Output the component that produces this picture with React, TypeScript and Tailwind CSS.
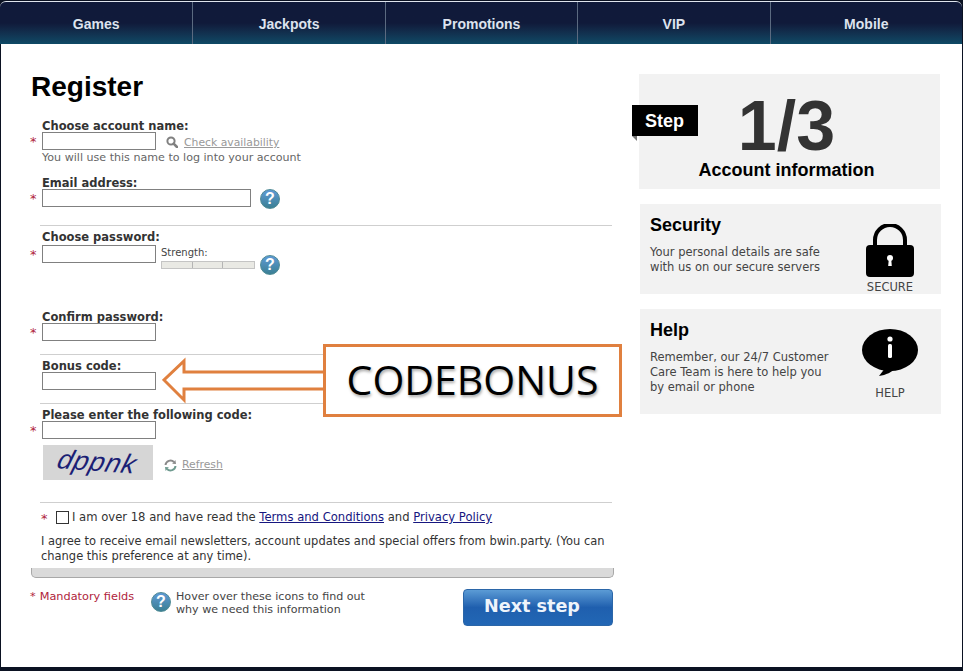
const navItems = ["Games", "Jackpots", "Promotions", "VIP", "Mobile"];

const Star = () => (
  <span className="w-[12px] shrink-0 translate-y-px text-[13px] leading-[18px] text-[#b0243c]">*</span>
);

const HelpIcon = ({ className = "" }: { className?: string }) => (
  <div
    className={`flex h-[20px] w-[20px] shrink-0 items-center justify-center rounded-full border border-[#4d8a94] bg-gradient-to-b from-[#5f9ad6] to-[#3a7f94] font-['Liberation_Sans',sans-serif] text-[16px] font-bold text-white ${className}`}
  >
    ?
  </div>
);

const Label = ({ children }: { children: string }) => (
  <div className="pl-[12px] text-[11.5px] font-bold leading-[14px] text-[#333]">{children}</div>
);

const TextInput = ({ wide = false }: { wide?: boolean }) => (
  <input
    type="text"
    className={`h-[18px] border border-[#808080] bg-white ${wide ? "w-[209px]" : "w-[114px]"}`}
  />
);

const Divider = ({ className }: { className: string }) => (
  <div className={`ml-[10px] h-px w-[572px] bg-[#cfcfcf] ${className}`} />
);

const SearchIcon = () => (
  <svg width="12" height="12" viewBox="0 0 12 12" className="shrink-0">
    <circle cx="5" cy="5" r="3.6" fill="none" stroke="#808080" strokeWidth="2" />
    <path d="M7.6 7.6 11 11" stroke="#808080" strokeWidth="2.6" strokeLinecap="round" />
  </svg>
);

const RefreshIcon = () => (
  <svg width="13" height="13" viewBox="0 0 13 13" className="shrink-0">
    <path d="M1.5 6A5 5 0 0 1 10 3" fill="none" stroke="#8a8a8a" strokeWidth="2" />
    <path d="M11.5 7A5 5 0 0 1 3 10" fill="none" stroke="#6f9a8f" strokeWidth="2" />
    <path d="M8.2 4.8 12 5 11.4 1Z" fill="#8a8a8a" />
    <path d="M4.8 8.2 1 8 1.6 12Z" fill="#6f9a8f" />
  </svg>
);

const LockIcon = () => (
  <svg width="48" height="54" viewBox="0 0 48 54">
    <path d="M9 24V16a15 15 0 0 1 30 0v8" fill="none" stroke="#000" strokeWidth="4" />
    <rect x="0" y="21" width="48" height="32" rx="4" fill="#000" />
    <circle cx="24" cy="34" r="3" fill="#fff" />
    <path d="M22.8 35h2.4l.6 7h-3.6Z" fill="#fff" />
  </svg>
);

const BubbleIcon = () => (
  <svg width="56" height="48" viewBox="0 0 56 48">
    <ellipse cx="28" cy="21" rx="28" ry="21" fill="#000" />
    <path d="M24 38 17 47c7-1 13-4 17-8Z" fill="#000" />
    <circle cx="28" cy="10" r="2.6" fill="#fff" />
    <rect x="26" y="15" width="4" height="14" rx="1.5" fill="#fff" />
  </svg>
);

const CalloutArrow = () => (
  <svg width="164" height="74" viewBox="0 0 164 74" className="absolute left-[161px] top-[345px]">
    <path d="M164 27H22V16L2 35 22 55V44H164" fill="#fff" stroke="#e0803f" strokeWidth="3" />
  </svg>
);

const SideCard = ({
  title,
  lines,
  caption,
  className,
  children,
}: {
  title: string;
  lines: string[];
  caption: string;
  className: string;
  children: React.ReactNode;
}) => (
  <section className={`ml-px flex w-[301px] justify-between bg-[#f2f2f2] pl-[10px] ${className}`}>
    <div>
      <h2 className="font-['Liberation_Sans',sans-serif] text-[18px] font-bold leading-[22px] text-black">
        {title}
      </h2>
      <div className="mt-[9px] text-[11.5px] leading-[15px] text-[#444]">
        {lines.map((line) => (
          <p key={line}>{line}</p>
        ))}
      </div>
    </div>
    <div className="flex w-[102px] flex-col items-center pt-[19px]">
      {children}
      <span className="mt-[2px] text-[11.5px] leading-[14px] text-[#444]">{caption}</span>
    </div>
  </section>
);

export default function App() {
  return (
    <div className="flex h-[671px] w-[963px] flex-col overflow-hidden bg-[#0b1222] pb-[4px] pl-px pr-px font-['DejaVu_Sans',sans-serif]">
      <nav className="-ml-px mt-px grid h-[43px] shrink-0 grid-cols-5 rounded-t-[6px] border-t border-[#dfe5ee] bg-gradient-to-b from-[#101a3a] from-50% to-[#0e4a66]">
        {navItems.map((item, i) => (
          <a
            key={item}
            className={`flex items-center justify-center pt-[2px] font-['Liberation_Sans',sans-serif] text-[14px] font-bold text-[#dde3ee] ${
              i > 0 ? "border-l border-[#5b6a80]" : ""
            }`}
          >
            {item}
          </a>
        ))}
      </nav>

      <main className="relative flex min-h-0 flex-1 bg-white">
        <div className="w-[638px] shrink-0 pl-[29px]">
          <h1 className="mt-[26px] pl-px font-['Liberation_Sans',sans-serif] text-[28px] font-bold leading-[34px] text-black">
            Register
          </h1>

          <div className="mt-[15px]">
            <Label>Choose account name:</Label>
            <div className="-mt-px flex items-start">
              <Star />
              <TextInput />
              <span className="ml-[10px] mt-[4px]">
                <SearchIcon />
              </span>
              <a className="ml-[6px] mt-[4px] text-[10.8px] leading-[14px] text-[#999] underline">Check availability</a>
            </div>
            <p className="mt-px pl-[12px] text-[11.1px] leading-[14px] text-[#666]">You will use this name to log into your account</p>
          </div>

          <div className="mt-[11px]">
            <Label>Email address:</Label>
            <div className="-mt-px flex items-start">
              <Star />
              <TextInput wide />
              <HelpIcon className="ml-[9px]" />
            </div>
          </div>

          <Divider className="mt-[16px]" />

          <div className="mt-[4px]">
            <Label>Choose password:</Label>
            <div className="mt-px flex items-start">
              <Star />
              <TextInput />
              <div className="ml-[5px] mt-px w-[94px]">
                <div className="text-[10px] leading-[14px] text-[#444]">Strength:</div>
                <div className="mt-px grid h-[8px] grid-cols-3 divide-x divide-[#b5b5b5] border border-[#c4c4c4] bg-[#e9e9e4]">
                  <span />
                  <span />
                  <span />
                </div>
              </div>
              <HelpIcon className="ml-[5px] mt-[10px]" />
            </div>
          </div>

          <div className="mt-[35px]">
            <Label>Confirm password:</Label>
            <div className="-mt-px flex items-start">
              <Star />
              <TextInput />
            </div>
          </div>

          <Divider className="mt-[13px]" />

          <div className="mt-[4px]">
            <Label>Bonus code:</Label>
            <div className="-mt-px flex items-start pl-[12px]">
              <TextInput />
            </div>
          </div>

          <Divider className="mt-[13px]" />

          <div className="mt-[4px]">
            <Label>Please enter the following code:</Label>
            <div className="-mt-px flex items-start">
              <Star />
              <TextInput />
            </div>
          </div>

          <div className="ml-[13px] mt-[6px] flex items-center">
            <div className="flex h-[35px] w-[110px] items-center justify-center bg-[#d6d6d6] font-['Liberation_Sans',sans-serif] text-[27px] italic tracking-[1px] text-[#1b1f75]">
              <span className="-translate-x-[1px] rotate-[4deg] -skew-x-12">dppnk</span>
            </div>
            <span className="ml-[11px] pt-[5px]">
              <RefreshIcon />
            </span>
            <a className="ml-[5px] pt-[6px] text-[10.8px] text-[#999] underline">Refresh</a>
          </div>

          <Divider className="mt-[22px]" />

          <div className="ml-[11px] mt-[7px] flex h-[14px] w-[570px] items-start">
            <span className="mt-[2px] w-[15px] text-[13px] leading-[14px] text-[#b0243c]">*</span>
            <span className="mt-px h-[13px] w-[13px] shrink-0 border border-[#333] bg-white" />
            <p className="ml-[3px] text-[11.6px] leading-[14px] text-[#333]">
              I am over 18 and have read the{" "}
              <a className="text-[#16167f] underline">Terms and Conditions</a> and{" "}
              <a className="text-[#16167f] underline">Privacy Policy</a>
            </p>
          </div>

          <p className="ml-[11px] mt-[10px] w-[575px] text-[11.48px] leading-[15px] text-[#333]">
            I agree to receive email newsletters, account updates and special offers from bwin.party. (You can change this preference at any time).
          </p>

          <div className="ml-px mt-[4px] h-[10px] w-[583px] rounded-b-[5px] border border-t-0 border-[#a8a8a8] bg-[#dadada]" />

          <div className="mt-[11px] flex items-start">
            <p className="flex w-[120px] gap-[4px] pt-px text-[11.3px] leading-[14px] text-[#b0243c]">
              <span>*</span>
              <span>Mandatory fields</span>
            </p>
            <HelpIcon className="ml-px mt-[3px]" />
            <p className="ml-[5px] w-[287px] pt-px text-[11.1px] leading-[13px] text-[#444]">
              Hover over these icons to find out
              <br />
              why we need this information
            </p>
            <button className="h-[37px] w-[150px] rounded-[4px] border border-[#2b66a8] bg-gradient-to-b from-[#5b9bd5] via-[#1f5fae] to-[#2267b5] pb-[3px] pr-[12px] text-[17.6px] font-bold text-[#eef4fb]">
              Next step
            </button>
          </div>
        </div>

        <aside className="w-[323px] pt-[30px]">
          <section className="relative h-[115px] w-[301px] bg-[#f2f2f2] pr-[6px] text-center font-['Liberation_Sans',sans-serif]">
            <div className="absolute -left-[7px] top-[31px] flex h-[31px] w-[66px] items-center justify-center bg-black pr-px pt-px text-[18px] font-bold text-white">
              Step
            </div>
            <svg width="5" height="5" viewBox="0 0 5 5" className="absolute -left-[7px] top-[62px]">
              <path d="M0 0h5v5Z" fill="#777" />
            </svg>
            <div className="pt-[20px] text-[70px] font-bold leading-[64px] text-[#333]">1/3</div>
            <div className="mt-px text-[18px] font-bold leading-[22px] text-black">Account information</div>
          </section>

          <SideCard
            title="Security"
            lines={["Your personal details are safe", "with us on our secure servers"]}
            caption="SECURE"
            className="mt-[15px] h-[90px] pt-[10px]"
          >
            <div className="-mt-[9px]">
              <LockIcon />
            </div>
          </SideCard>

          <SideCard
            title="Help"
            lines={["Remember, our 24/7 Customer", "Care Team is here to help you", "by email or phone"]}
            caption="HELP"
            className="mt-[15px] h-[105px] pt-[10px]"
          >
            <div className="-mt-[9px] mb-[7px]">
              <BubbleIcon />
            </div>
          </SideCard>
        </aside>

        <div className="absolute -top-[44px] left-0">
          <CalloutArrow />
          <div className="absolute left-[322px] top-[344px] flex h-[73px] w-[299px] items-center justify-center border-[3px] border-[#e0803f] bg-white pb-[2px] font-['Open_Sans',sans-serif] text-[41px] text-black [text-shadow:1px_2px_3px_rgba(0,0,0,0.35)]">
            CODEBONUS
          </div>
        </div>
      </main>
    </div>
  );
}
